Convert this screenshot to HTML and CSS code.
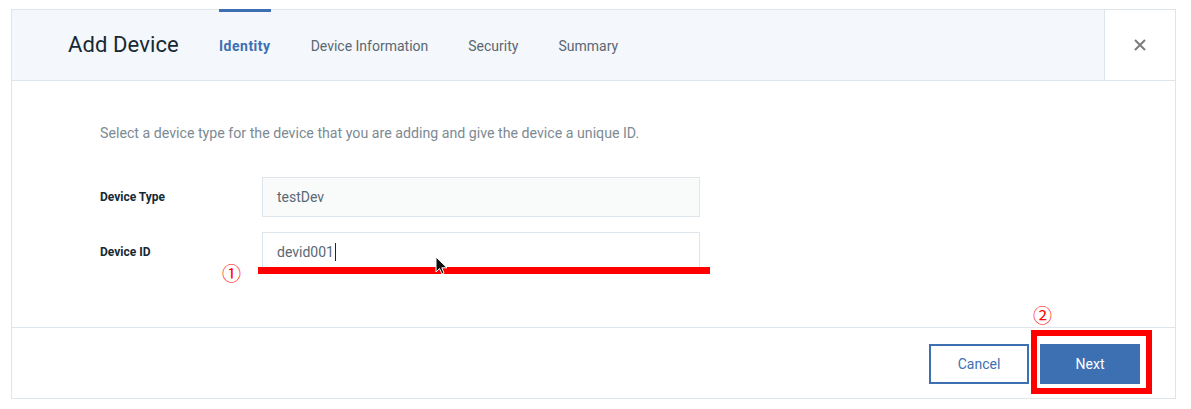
FILE: index.html
```html
<!DOCTYPE html>
<html lang="en">
<head>
<meta charset="utf-8">
<title>Add Device</title>
<link rel="stylesheet" href="styles.css">
</head>
<body>
<div class="dialog">
  <header class="head">
    <h1 class="title">Add Device</h1>
    <nav class="tabs">
      <span class="tab active">Identity</span>
      <span class="tab">Device Information</span>
      <span class="tab">Security</span>
      <span class="tab">Summary</span>
    </nav>
    <button class="close" aria-label="Close">
      <svg width="12" height="12" viewBox="0 0 12 12"><path d="M1 1 L11 11 M11 1 L1 11" stroke="#7c7c7c" stroke-width="2" fill="none"/></svg>
    </button>
  </header>
  <main class="content">
    <p class="desc">Select a device type for the device that you are adding and give the device a unique ID.</p>
    <div class="form">
      <label class="label">Device Type</label>
      <div class="input readonly">testDev</div>
      <label class="label">Device ID</label>
      <div class="input">devid001<span class="caret"></span></div>
    </div>
  </main>
  <footer class="foot">
    <button class="btn secondary">Cancel</button>
    <button class="btn primary">Next</button>
  </footer>

  <div class="mark-line"></div>
  <span class="num num1">①</span>
  <div class="mark-box"></div>
  <span class="num num2">②</span>
  <svg class="pointer" width="14" height="20" viewBox="0 0 14 20"><path d="M1 1 L1 16 L4.5 12.5 L7 18 L9 17 L6.8 11.8 L12 11.8 Z" fill="#111" stroke="#fff" stroke-width="1"/></svg>
</div>
</body>
</html>
```
FILE: styles.css
```css
* { box-sizing: border-box; }
html, body { margin: 0; padding: 0; background: #fff; }
body {
  font-family: Roboto, "Noto Sans", "Liberation Sans", sans-serif;
  color: #152935;
}
.dialog {
  position: relative;
  margin: 9px 0 0 11px;
  width: 1165px;
  height: 390px;
  border: 1px solid #dfe6eb;
  display: flex;
  flex-direction: column;
}
.head {
  height: 71px;
  background: #f4f7fb;
  border-bottom: 1px solid #dfe6eb;
  display: flex;
  align-items: stretch;
  padding-left: 56px;
}
.title {
  margin: 0;
  font-size: 22px;
  font-weight: 400;
  line-height: 70px;
  color: #152935;
  width: 151px;
  letter-spacing: 0.1px;
}
.tabs {
  display: flex;
  gap: 40px;
  flex: 1;
  align-items: stretch;
}
.tab {
  font-size: 14px;
  color: #5a6872;
  border-top: 3px solid transparent;
  margin-top: -1px;
  line-height: 68px;
}
.tab.active {
  color: #3d70b2;
  font-weight: 700;
  border-top-color: #3d70b2;
  letter-spacing: 0.5px;
}
.close {
  width: 71px;
  border: 0;
  border-left: 1px solid #dfe6eb;
  background: #fff;
  display: flex;
  align-items: center;
  justify-content: center;
  padding: 0;
}
.content {
  flex: 1;
  padding: 42px 0 0 88px;
  border-bottom: 1px solid #dfe6eb;
}
.desc {
  margin: 0;
  font-size: 14.2px;
  line-height: 20px;
  color: #7d8a93;
}
.form {
  margin-top: 34px;
  display: grid;
  grid-template-columns: 162px 438px;
  row-gap: 15px;
  align-items: center;
}
.label {
  font-size: 12px;
  font-weight: 700;
  color: #152935;
}
.input {
  height: 40px;
  border: 1px solid #dfe6eb;
  background: #fff;
  padding: 0 14px;
  font-size: 14px;
  line-height: 38px;
  color: #5a6872;
  display: flex;
  align-items: center;
}
.input.readonly { background: #f9fbfb; }
.caret {
  display: inline-block;
  width: 1px;
  height: 18px;
  background: #152935;
  margin-left: 1px;
}
.foot {
  height: 70px;
  display: flex;
  justify-content: flex-end;
  align-items: flex-start;
  gap: 11px;
  padding: 16px 35px 0 0;
}
.btn {
  width: 100px;
  height: 40px;
  font-family: inherit;
  font-size: 14px;
  border: 2px solid #3d70b2;
  padding: 0;
}
.btn.secondary { background: #fff; color: #3d70b2; }
.btn.primary { background: #3d70b2; color: #fff; }

.mark-line {
  position: absolute;
  left: 246px;
  top: 257px;
  width: 452px;
  height: 7px;
  background: #ff0000;
}
.num {
  position: absolute;
  color: #ff0000;
  font-family: "Noto Sans CJK JP", "DejaVu Sans", sans-serif;
  font-size: 19px;
  line-height: 20px;
}
.num1 { left: 210px; top: 253px; }
.num2 { left: 1021px; top: 295px; }
.mark-box {
  position: absolute;
  left: 1019px;
  top: 320px;
  width: 121px;
  height: 64px;
  border: 6px solid #ff0000;
}
.pointer {
  position: absolute;
  left: 423px;
  top: 246px;
}
```
